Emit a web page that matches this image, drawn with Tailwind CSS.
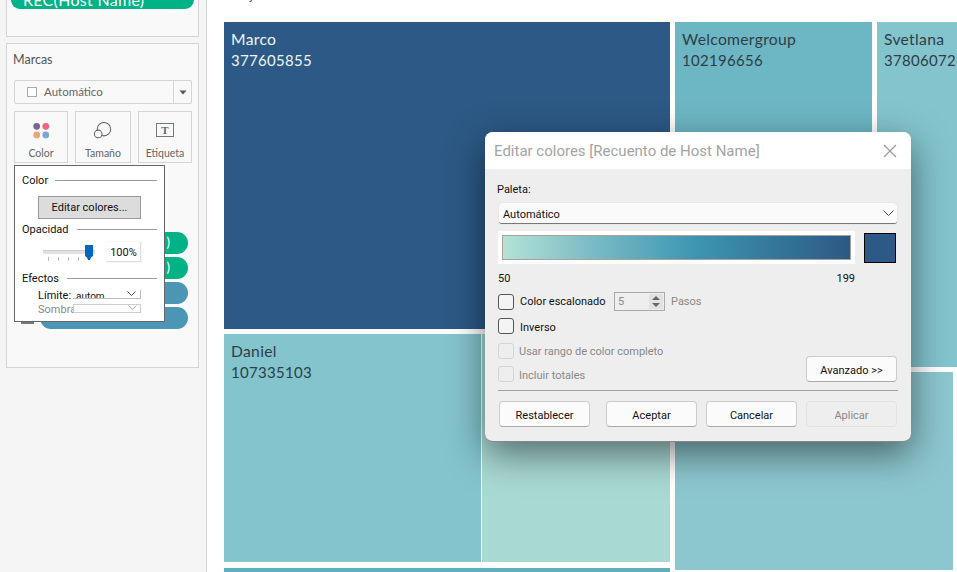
<!DOCTYPE html>
<html lang="en">
<head>
    <meta charset="UTF-8">
    <meta name="viewport" content="width=device-width, initial-scale=1.0">
    <script src="https://cdn.jsdelivr.net/npm/@tailwindcss/browser@4"></script>
    <title>Editar colores</title>
</head>
<body class="relative w-[957px] h-[572px] overflow-hidden bg-white flex font-['Roboto',sans-serif]">

    <!-- left panel -->
    <aside class="w-[207px] h-full shrink-0 bg-[#f5f5f5] border-r border-[#d4d4d4] pl-[6px] font-['Lato',sans-serif]">
        <div class="w-[193px] h-[37px] bg-[#f9f9f9] border border-t-0 border-[#d4d4d4] px-[4px] overflow-hidden">
            <div class="h-[9px] rounded-b-[10px] bg-[#00b386] text-white text-[16px] tracking-[0.3px] leading-[18px] pl-[12px] overflow-hidden">
                <div class="-mt-[9px]">REC(Host Name)</div>
            </div>
        </div>
        <div class="relative w-[193px] h-[325px] mt-[6px] bg-[#f9f9f9] border border-[#d4d4d4] pl-[7px] pr-[6px] pt-[8px]">
            <div class="-ml-px text-[12.5px] leading-[15px] text-[#555]">Marcas</div>
            <div class="flex items-center w-[178px] h-[24px] mt-[13px] border border-[#d4d4d4] rounded-[2px] bg-[#f9f9f9]">
                <span class="ml-[12px] w-[10px] h-[10px] border border-[#aaa] bg-white"></span>
                <span class="ml-[7px] text-[11.5px] text-[#666]">Automático</span>
                <span class="ml-auto w-[18px] h-full border-l border-[#d4d4d4] flex items-center justify-center">
                    <svg width="8" height="5" viewBox="0 0 8 5"><path d="M0.5 0.5h7L4 4.5z" fill="#555"/></svg>
                </span>
            </div>
            <div class="flex gap-[7px] mt-[7px]">
                <div class="w-[54px] h-[52px] border border-[#d4d4d4] flex flex-col items-center text-[10.5px] text-[#666]">
                    <svg class="mt-[10px]" width="20" height="18" viewBox="0 0 20 18">
                        <circle cx="5.5" cy="4.5" r="3.500" fill="#7b6294"/>
                        <circle cx="15" cy="4.5" r="3.500" fill="#f0617a"/>
                        <circle cx="5.5" cy="13.5" r="3.500" fill="#efa57a"/>
                        <circle cx="15" cy="13.5" r="3.500" fill="#7ba7d0"/>
                    </svg>
                    <span class="mt-[7px]">Color</span>
                </div>
                <div class="w-[56px] h-[52px] border border-[#d4d4d4] flex flex-col items-center text-[10.5px] text-[#666]">
                    <svg class="mt-[10px]" width="20" height="18" viewBox="0 0 20 18" fill="none" stroke="#666" stroke-width="1.100">
                        <circle cx="11" cy="7.5" r="7"/>
                        <circle cx="5" cy="12.5" r="4" fill="#f9f9f9"/>
                    </svg>
                    <span class="mt-[7px]">Tamaño</span>
                </div>
                <div class="w-[54px] h-[52px] border border-[#d4d4d4] flex flex-col items-center text-[10.5px] text-[#666]">
                    <div class="mt-[11px] w-[18px] h-[15px] border-[1.5px] border-[#777] flex items-center justify-center font-['Liberation_Serif',serif] font-bold text-[11px] leading-none text-[#666]">T</div>
                    <span class="mt-[9px]">Etiqueta</span>
                </div>
            </div>
            <!-- shelf pills, mostly behind the popup -->
            <div class="flex flex-col gap-[3px] mt-[69px] ml-[26px] w-[148px] text-white text-[13px]">
                <div class="h-[22px] rounded-full bg-[#00b386] text-right pr-[18px] leading-[21px]">)</div>
                <div class="h-[22px] rounded-full bg-[#00b386] text-right pr-[18px] leading-[21px]">)</div>
                <div class="h-[22px] rounded-full bg-[#4a96b4]"></div>
                <div class="h-[22px] rounded-full bg-[#4a96b4]"></div>
            </div>
            <div class="absolute left-[14px] top-[276px] w-[13px] h-[4px] bg-[#777]"></div>
        </div>
    </aside>

    <!-- treemap -->
    <main class="flex-1 pl-[17px] relative">
        <div class="h-[22px] pl-[25px] text-[12px] leading-[14px] text-[#5a4a3a] overflow-hidden"><div class="-mt-[12px]">y</div></div>
        <div class="flex gap-[5px] font-['Lato',sans-serif] text-[15px] tracking-[0.3px] leading-[21px] text-[#2f3e46]">
            <div class="w-[446px] shrink-0">
                <div class="h-[307px] bg-[#2c5985] text-[#eef5fb] pl-[7px] pt-[7px]"><span class="text-[15.7px]">Marco</span><br>377605855</div>
                <div class="flex gap-px h-[228px] mt-[5px]">
                    <div class="w-[257px] bg-[#83c4cd] pl-[7px] pt-[7px]"><span class="text-[15.7px]">Daniel</span><br>107335103</div>
                    <div class="flex-1 bg-[#a8d9d3]"></div>
                </div>
                <div class="h-[6px] mt-[6px] bg-[#5fb0bd]"></div>
            </div>
            <div class="w-[282px] shrink-0">
                <div class="flex gap-[5px] h-[345px]">
                    <div class="w-[197px] bg-[#6db6c4] pl-[7px] pt-[7px]"><span class="text-[15.7px]">Welcomergroup</span><br>102196656</div>
                    <div class="w-[80px] bg-[#83c4cd] pl-[7px] pt-[7px] whitespace-nowrap overflow-hidden"><span class="text-[15.7px]">Svetlana</span><br>378060726</div>
                </div>
                <div class="w-[278px] h-[198px] mt-[5px] bg-[#8cc6ce]"></div>
            </div>
        </div>
    </main>

    <!-- mark colour popup -->
    <div class="absolute left-[14px] top-[165px] w-[151px] h-[157px] bg-white border border-[#666] px-[7px] pt-[7px] text-[11px] leading-[15px] text-[#111]">
        <div class="flex items-center gap-[7px]"><span>Color</span><span class="flex-1 h-px bg-[#999]"></span></div>
        <button class="block w-[103px] h-[23px] ml-[16px] mt-[8px] bg-[#dcdcdc] border border-[#999] text-[11px]">Editar colores...</button>
        <div class="flex items-center gap-[8px] mt-[3px]"><span>Opacidad</span><span class="flex-1 h-px bg-[#999]"></span></div>
        <div class="flex mt-[5px] h-[20px]">
            <div class="relative w-[52px] h-full ml-[21px]">
                <div class="absolute left-0 right-0 top-[8px] h-[4px] bg-[#e2e2e2] border-t border-[#ccc]"></div>
                <div class="flex gap-[9px] absolute left-[5px] top-[15px]">
                    <span class="w-px h-[4px] bg-[#bbb]"></span><span class="w-px h-[4px] bg-[#bbb]"></span><span class="w-px h-[4px] bg-[#bbb]"></span><span class="w-px h-[4px] bg-[#bbb]"></span>
                </div>
                <svg class="absolute left-[42px] top-[3px]" width="8" height="16" viewBox="0 0 8 16"><path d="M0 0h8v11l-2 1.500-1 2.500h-2l-1-2.500-2-1.500z" fill="#0067c0"/></svg>
            </div>
            <div class="ml-[12px] w-[34px] h-[20px] border-b border-r border-[#ddd] shadow-[0_0_1px_#ccc] flex items-center justify-center text-[11px] pt-[2px]">100%</div>
        </div>
        <div class="flex items-center gap-[8px] mt-[9px]"><span>Efectos</span><span class="flex-1 h-px bg-[#999]"></span></div>
        <div class="flex items-start mt-[2px] ml-[16px] h-[14px]">
            <span class="w-[35px]">Límite:</span>
            <div class="relative w-[68px] h-[9px] mt-[2px] border-b border-r border-[#bbb] overflow-hidden">
                <span class="absolute left-[3px] -top-px text-[10px]">autom</span>
                <svg class="absolute right-[4px] top-[1px]" width="9" height="5" viewBox="0 0 9 5" fill="none" stroke="#444"><path d="M0.500 0.500l4 4 4-4"/></svg>
            </div>
        </div>
        <div class="relative ml-[16px] text-[#888] h-[15px]">
            <span>Sombra</span>
            <div class="absolute left-[35px] top-[2px] w-[68px] h-[9px] bg-white border border-[#ccc]">
                <svg class="absolute right-[3px] top-0" width="9" height="5" viewBox="0 0 9 5" fill="none" stroke="#aaa"><path d="M0.500 0.500l4 4 4-4"/></svg>
            </div>
        </div>
    </div>

    <!-- edit colours dialog -->
    <div class="absolute left-[485px] top-[132px] w-[426px] h-[310px] rounded-[8px] overflow-hidden bg-[#eeeeee] border-b border-[#888] shadow-[0_12px_36px_rgba(0,0,0,0.5)] text-[11px] leading-[15px] text-[#111]">
        <div class="flex items-center justify-between h-[37px] bg-white pl-[9px] pr-[14px] text-[15px] text-[#a3a3a3]">
            <span class="pt-px">Editar colores [Recuento de Host Name]</span>
            <svg width="14" height="14" viewBox="0 0 14 14" stroke="#999" stroke-width="1.200"><path d="M1 1l12 12M13 1L1 13"/></svg>
        </div>
        <div class="px-[13px] pt-[13px]">
            <div class="-ml-px">Paleta:</div>
            <div class="flex items-center justify-between w-[398px] h-[21px] mt-[6px] ml-[1px] pl-[4px] pr-[3px] bg-[#fafafa] border-b border-[#777] rounded-[3px] shadow-[0_0_1px_#bbb]">
                <span class="pt-[2px]">Automático</span>
                <svg width="11" height="6" viewBox="0 0 11 6" fill="none" stroke="#444"><path d="M0.500 0.500l5 5 5-5"/></svg>
            </div>
            <div class="flex items-center w-[398px] h-[33px] mt-[7px]">
                <div class="w-[357px] h-[33px] bg-white p-[4px]">
                    <div class="h-[25px] border border-[#a8a298] bg-[linear-gradient(to_right,#b5e2d5_0%,#7bbcc6_25%,#3e96b3_55%,#2c5985_100%)]"></div>
                </div>
                <div class="w-[32px] h-[30px] ml-[9px] bg-[#2c5985] border border-black"></div>
            </div>
            <div class="flex justify-between w-[357px] mt-[7px]"><span>50</span><span>199</span></div>
            <div class="flex items-center mt-[6px] h-[19px]">
                <span class="w-[16px] h-[16px] border border-[#555] rounded-[3px] bg-[#f4f4f4]"></span>
                <span class="ml-[6px] w-[94px]">Color escalonado</span>
                <div class="flex items-center justify-between w-[51px] h-[19px] border border-[#aaa] pl-[3px] text-[#888]">
                    <span>5</span>
                    <svg class="mr-px" width="14" height="15" viewBox="0 0 14 15"><rect width="14" height="15" fill="#e2e2e2"/><path d="M3 6l4-4 4 4z" fill="#666"/><path d="M3 9l4 4 4-4z" fill="#666"/></svg>
                </div>
                <span class="ml-[6px] text-[#888]">Pasos</span>
            </div>
            <div class="flex items-center mt-[7px] h-[16px]">
                <span class="w-[16px] h-[16px] border border-[#555] rounded-[3px] bg-[#f4f4f4]"></span>
                <span class="ml-[6px] pt-[2px]">Inverso</span>
            </div>
            <div class="flex justify-between items-end w-[399px] h-[39px] mt-[9px] text-[#888]">
                <div>
                    <div class="flex items-center h-[16px]">
                        <span class="w-[16px] h-[16px] border border-[#d4d4d4] rounded-[3px]"></span>
                        <span class="ml-[5px]">Usar rango de color completo</span>
                    </div>
                    <div class="flex items-center h-[16px] mt-[7px]">
                        <span class="w-[16px] h-[16px] border border-[#d4d4d4] rounded-[3px]"></span>
                        <span class="ml-[5px] pt-[2px]">Incluir totales</span>
                    </div>
                </div>
                <button class="w-[91px] h-[26px] pt-[2px] bg-[#fbfbfb] border border-[#ccc] border-b-[#aaa] rounded-[4px] text-[#111] text-[11px]">Avanzado &gt;&gt;</button>
            </div>
            <div class="h-px w-[400px] mt-[8px] bg-[#a0a0a0]"></div>
            <div class="flex mt-[10px] ml-[1px] text-[11px]">
                <button class="w-[91px] h-[26px] pt-[2px] bg-[#fbfbfb] border border-[#ccc] border-b-[#aaa] rounded-[4px]">Restablecer</button>
                <button class="w-[91px] h-[26px] pt-[2px] ml-[16px] bg-[#fbfbfb] border border-[#ccc] border-b-[#aaa] rounded-[4px]">Aceptar</button>
                <button class="w-[91px] h-[26px] pt-[2px] ml-[9px] bg-[#fbfbfb] border border-[#ccc] border-b-[#aaa] rounded-[4px]">Cancelar</button>
                <button class="w-[91px] h-[26px] pt-[2px] ml-[9px] border border-[#e2e2e2] rounded-[4px] text-[#888]">Aplicar</button>
            </div>
        </div>
    </div>
</body>
</html>
